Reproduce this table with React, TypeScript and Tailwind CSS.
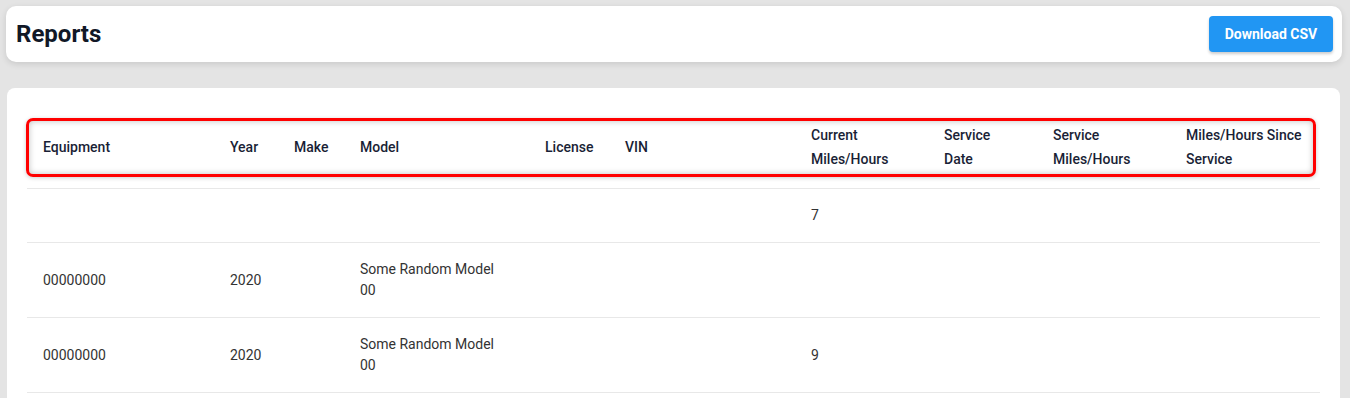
import React from "react";

const cols = "grid grid-cols-[187px_64px_66px_185px_80px_186px_133px_109px_133px_150px]";

type Row = { cells: (React.ReactNode | null)[] };

const rows: Row[] = [
  { cells: [null, null, null, null, null, null, "7", null, null, null] },
  {
    cells: [
      "00000000",
      "2020",
      null,
      <>Some Random Model<br />00</>,
      null,
      null,
      null,
      null,
      null,
      null,
    ],
  },
  {
    cells: [
      "00000000",
      "2020",
      null,
      <>Some Random Model<br />00</>,
      null,
      null,
      "9",
      null,
      null,
      null,
    ],
  },
];

const headers: React.ReactNode[] = [
  "Equipment",
  "Year",
  "Make",
  "Model",
  "License",
  "VIN",
  <>Current<br />Miles/Hours</>,
  <>Service<br />Date</>,
  <>Service<br />Miles/Hours</>,
  <>Miles/Hours Since<br />Service</>,
];

export default function App() {
  return (
    <div
      className="min-h-[398px] bg-[#e4e4e4] pt-[6px] pl-[6px] pr-[8px] overflow-hidden"
      style={{ fontFamily: "Roboto, 'Liberation Sans', sans-serif" }}
    >
      <div className="flex items-center justify-between rounded-[10px] bg-white pl-[10px] pr-[9px] py-[10px] shadow-[0_2px_6px_rgba(0,0,0,0.12)]">
        <h1 className="text-[24px] font-bold leading-[36px] text-[#111827]">Reports</h1>
        <button className="h-[36px] w-[124px] rounded-[4px] bg-[#2196f3] text-[14px] font-bold text-white shadow-[0_2px_3px_rgba(0,0,0,0.2)]">
          Download CSV
        </button>
      </div>

      <div className="mt-[26px] ml-[1px] mr-[2px] rounded-[8px] bg-white px-5 pt-[30px] pb-4">
        <div className="ml-[-1px] w-[1290px] rounded-[7px] border-[3px] border-[#ff0000] shadow-[inset_0_0_6px_rgba(0,0,0,0.25),0_1px_4px_rgba(0,0,0,0.2)]">
          <div className={`${cols} ml-[-2px] h-[53px] pb-[1px] items-center text-[14px] font-medium leading-[24px] text-[#1a1f36]`}>
            {headers.map((h, i) => (
              <div key={i} className="pl-4">
                {h}
              </div>
            ))}
          </div>
        </div>
        <div className="mt-[11px]">
          {rows.map((r, ri) => (
            <div
              key={ri}
              className={`${cols} items-center border-t border-[#e8e8e8] py-4 text-[14px] leading-[21px] text-[#333333] ${
                ri === rows.length - 1 ? "border-b" : ""
              }`}
            >
              {r.cells.map((c, ci) => (
                <div key={ci} className="pl-4 min-h-[21px]">
                  {c}
                </div>
              ))}
            </div>
          ))}
        </div>
      </div>
    </div>
  );
}
